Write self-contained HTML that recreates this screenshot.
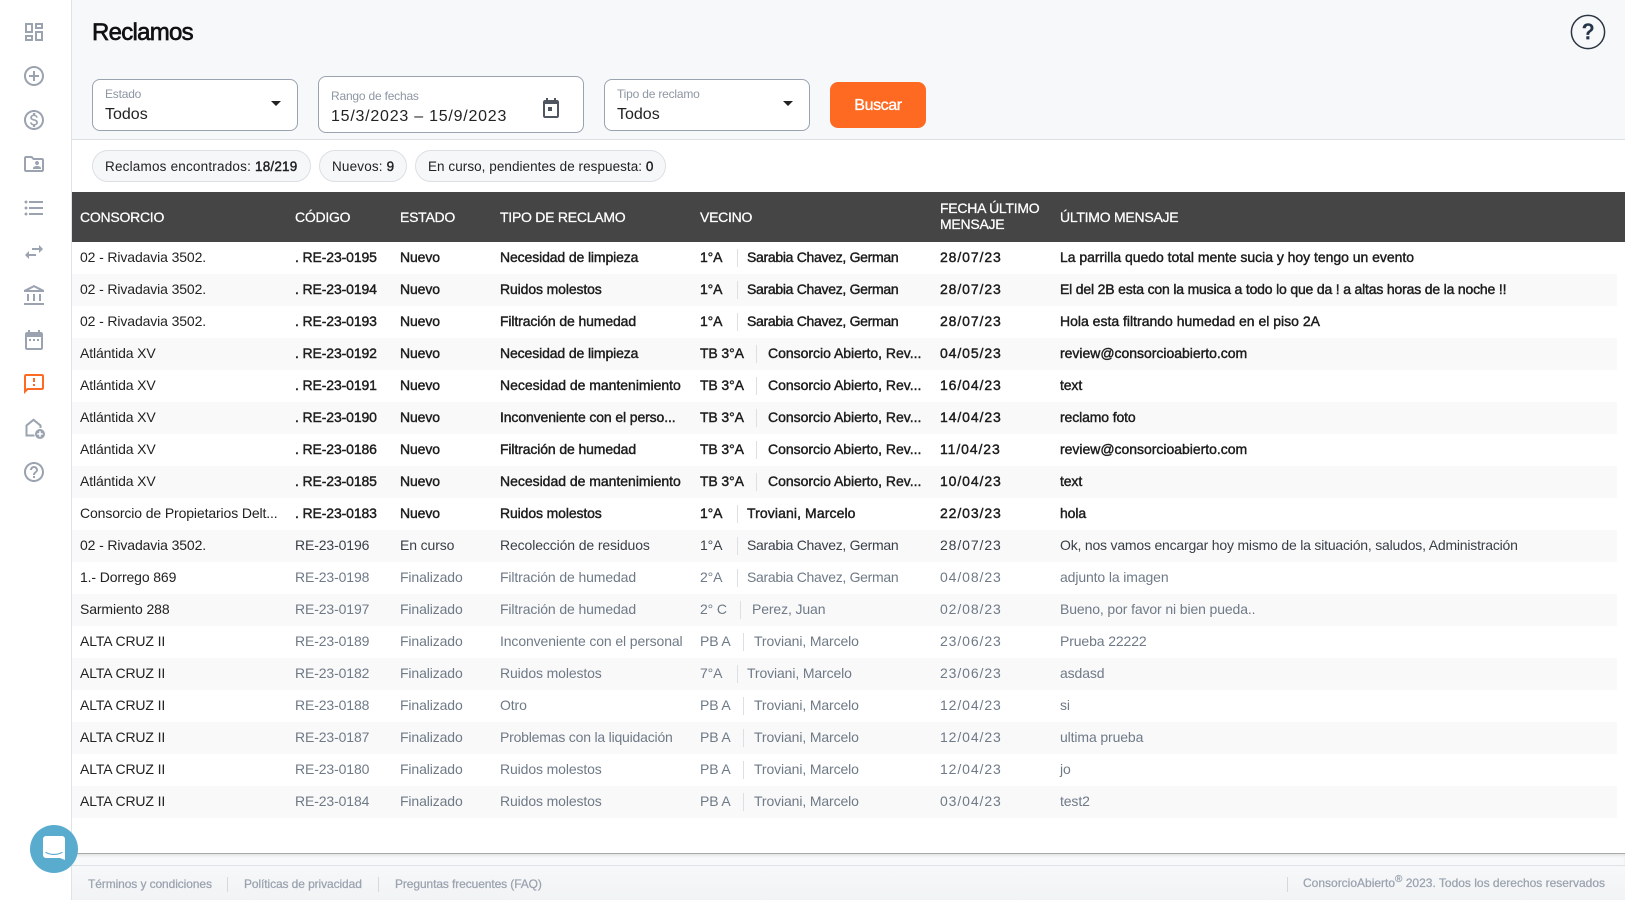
<!DOCTYPE html>
<html lang="es">
<head>
<meta charset="utf-8">
<title>Reclamos</title>
<style>
*{box-sizing:border-box}
html,body{margin:0;padding:0;width:1625px;height:900px;overflow:hidden;background:#fff;font-family:"Liberation Sans",sans-serif;color:#222}
.abs{position:absolute}
#side{position:absolute;left:0;top:0;width:72px;height:900px;background:#fff;border-right:1px solid #dfe2e7}
#side svg{position:absolute;left:22px;width:24px;height:24px;fill:#9aa3af}
#top{position:absolute;left:72px;top:0;width:1553px;height:140px;background:#f7f8fa;border-bottom:1px solid #dcdfe4}
h1{position:absolute;left:92px;top:17px;margin:0;font-size:24px;line-height:32px;font-weight:400;-webkit-text-stroke:.65px #111;letter-spacing:-.72px;color:#111}
.box{position:absolute;background:#fff;border:1px solid #9aa3b0;border-radius:8px}
.lab{position:absolute;font-size:12px;color:#8d96a3;letter-spacing:-.2px;white-space:nowrap}
.val{position:absolute;font-size:16px;color:#222;white-space:nowrap}
.car{position:absolute;width:0;height:0;border-left:5px solid transparent;border-right:5px solid transparent;border-top:5px solid #222}
#buscar{position:absolute;left:830px;top:83px;width:96px;height:46px;color:#fff;font-size:16px;letter-spacing:-.4px;text-align:center;line-height:46px;-webkit-text-stroke:.35px #fff}
#btn{position:absolute;left:830px;top:82px;width:96px;height:46px;background:#ff6a22;border-radius:8px}
.pill{position:absolute;top:150px;height:32px;background:#f6f7f9;border:1px solid #dcdfe4;border-radius:16px;font-size:13.5px;line-height:32px;white-space:nowrap;padding-left:12px;letter-spacing:.17px}
.pill b{font-weight:400;-webkit-text-stroke:.4px #222}
#thead{position:absolute;left:72px;top:192px;width:1553px;height:50px;background:#454545}
.th{position:absolute;color:#fff;font-size:14px;letter-spacing:-.25px;white-space:nowrap;line-height:16px;-webkit-text-stroke:.25px #fff}
.r{position:absolute;left:72px;width:1545px;height:32px;font-size:14px;line-height:32px;letter-spacing:-.12px}
.r.s{background:#f9f9fa}
.r span{position:absolute;top:-1px;white-space:nowrap}
.r i{position:absolute;top:7px;width:1px;height:18px;background:#dcdfe4}
.c1{left:8px}.c2{left:223px}.c3{left:328px}.c4{left:428px}.c5{left:628px}.c6{left:868px;letter-spacing:.9px}.c7{left:988px}.c8{letter-spacing:-.3px}
.n .c2,.n .c3,.n .c4,.n .c5,.n .c6,.n .c7,.n .c8{-webkit-text-stroke:.42px #1c1c1c;color:#1c1c1c}
.f span{color:#6f7a87}.f .c1{color:#222}
.e .c2,.e .c3,.e .c4,.e .c5,.e .c6,.e .c7,.e .c8{color:#3a4048}
#under{position:absolute;left:72px;top:853px;width:1553px;height:12px;background:#f8f9fa;border-top:1px solid #a9a9a9;box-shadow:inset 0 2px 2px rgba(0,0,0,.08)}
#foot{position:absolute;left:72px;top:865px;width:1553px;height:35px;background:linear-gradient(#f7f8fa,#f2f3f5);border-top:1px solid #dfe2e7}
.ft{position:absolute;top:876px;font-size:12px;line-height:16px;color:#9aa3af;white-space:nowrap;-webkit-text-stroke:.25px #9aa3af;letter-spacing:-.1px}
.fs{position:absolute;top:877px;width:1px;height:15px;background:#d5d8dd}
sup{font-size:10px;line-height:0}
#chat{position:absolute;left:30px;top:825px;width:48px;height:48px;border-radius:50%;background:#5aaccf}
</style>
</head>
<body>
<div id="top"></div>
<div id="side">
<svg style="top:20px" viewBox="0 0 24 24"><path d="M19 5v2h-4V5h4M9 5v6H5V5h4m10 8v6h-4v-6h4M9 17v2H5v-2h4M21 3h-8v6h8V3zM11 3H3v10h8V3zm10 8h-8v10h8V11zm-10 4H3v6h8v-6z"/></svg>
<svg style="top:64px" viewBox="0 0 24 24"><path d="M13 7h-2v4H7v2h4v4h2v-4h4v-2h-4V7zm-1-5C6.48 2 2 6.48 2 12s4.48 10 10 10 10-4.48 10-10S17.52 2 12 2zm0 18c-4.41 0-8-3.59-8-8s3.59-8 8-8 8 3.59 8 8-3.59 8-8 8z"/></svg>
<svg style="top:108px" viewBox="0 0 24 24"><path d="M12 2C6.48 2 2 6.48 2 12s4.48 10 10 10 10-4.48 10-10S17.52 2 12 2zm0 18c-4.41 0-8-3.59-8-8s3.59-8 8-8 8 3.59 8 8-3.59 8-8 8zm.31-8.86c-1.77-.45-2.34-.94-2.34-1.67 0-.84.79-1.43 2.1-1.43 1.38 0 1.9.66 1.94 1.64h1.71c-.05-1.34-.87-2.57-2.49-2.97V5H10.9v1.69c-1.51.32-2.72 1.3-2.72 2.81 0 1.79 1.49 2.69 3.66 3.21 1.95.46 2.34 1.15 2.34 1.87 0 .53-.39 1.39-2.1 1.39-1.6 0-2.23-.72-2.32-1.64H8.04c.1 1.7 1.36 2.66 2.86 2.97V19h2.34v-1.67c1.52-.29 2.72-1.16 2.73-2.77-.01-2.2-1.9-2.96-3.66-3.42z"/></svg>
<svg style="top:152px" viewBox="0 0 24 24"><path d="M20 6h-8l-2-2H4c-1.1 0-1.99.9-1.99 2L2 18c0 1.1.9 2 2 2h16c1.1 0 2-.9 2-2V8c0-1.1-.9-2-2-2zm0 12H4V6h5.17l2 2H20v10zm-5-5c1.1 0 2-.9 2-2s-.9-2-2-2-2 .9-2 2 .9 2 2 2zm-4 4h8v-1c0-1.33-2.67-2-4-2s-4 .67-4 2v1z"/></svg>
<svg style="top:196px" viewBox="0 0 24 24"><path d="M4 10.5c-.83 0-1.5.67-1.5 1.5s.67 1.5 1.5 1.5 1.5-.67 1.5-1.5-.67-1.5-1.5-1.5zm0-6c-.83 0-1.5.67-1.5 1.5S3.17 7.5 4 7.5 5.5 6.83 5.5 6 4.83 4.5 4 4.5zm0 12c-.83 0-1.5.68-1.5 1.5s.68 1.5 1.5 1.5 1.5-.68 1.5-1.5-.67-1.5-1.5-1.5zM7 19h14v-2H7v2zm0-6h14v-2H7v2zm0-8v2h14V5H7z"/></svg>
<svg style="top:240px" viewBox="0 0 24 24"><path d="M6.99 11L3 15l3.99 4v-3H14v-2H6.99v-3zM21 9l-3.99-4v3H10v2h7.01v3L21 9z"/></svg>
<svg style="top:284px" viewBox="0 0 24 24"><path d="M7 10H5v7h2v-7zm6 0h-2v7h2v-7zm9 9H2v2h20v-2zm-3-9h-2v7h2v-7zM12 3.26L17.21 6H6.79L12 3.26M12 1L2 6v2h20V6L12 1z"/></svg>
<svg style="top:328px" viewBox="0 0 24 24"><path d="M19 4h-1V2h-2v2H8V2H6v2H5c-1.1 0-2 .9-2 2v14c0 1.1.9 2 2 2h14c1.1 0 2-.9 2-2V6c0-1.1-.9-2-2-2zm0 16H5V9h14v11zM7 11h2v2H7zm4 0h2v2h-2zm4 0h2v2h-2z"/></svg>
<svg style="top:372px;fill:#ff6a22" viewBox="0 0 24 24"><path d="M20 2H4c-1.1 0-1.99.9-1.99 2L2 22l4-4h14c1.1 0 2-.9 2-2V4c0-1.1-.9-2-2-2zm0 14H5.17L4 17.17V4h16v12zm-9-4h2v2h-2zm0-6h2v4h-2z"/></svg>
<svg style="top:416px" viewBox="0 0 24 24"><path d="M11.5 2.5L3.5 9v11.5h9v-2H5.5V10l6-4.9 6 4.9v2h2V9z"/><circle cx="18" cy="18" r="5"/><path d="M17.2 15.2h1.6v2h2v1.6h-2v2h-1.6v-2h-2v-1.6h2z" fill="#fff"/></svg>
<svg style="top:460px" viewBox="0 0 24 24"><path d="M11 18h2v-2h-2v2zm1-16C6.48 2 2 6.48 2 12s4.48 10 10 10 10-4.48 10-10S17.52 2 12 2zm0 18c-4.41 0-8-3.59-8-8s3.59-8 8-8 8 3.59 8 8-3.59 8-8 8zm0-14c-2.21 0-4 1.79-4 4h2c0-1.1.9-2 2-2s2 .9 2 2c0 2-3 1.75-3 5h2c0-2.25 3-2.5 3-5 0-2.21-1.79-4-4-4z"/></svg>
</div>

<h1>Reclamos</h1>
<svg class="abs" style="left:1570px;top:14px" width="36" height="36" viewBox="0 0 36 36"><circle cx="18" cy="18" r="16.6" fill="none" stroke="#2c3542" stroke-width="1.5"/><path d="M12.6 14.2c.2-3.2 2.4-5 5.5-5 3.2 0 5.4 1.9 5.4 4.6 0 2-1 3.1-2.6 4.2-1.3.9-1.7 1.4-1.7 2.9h-2.8c0-2.3.6-3.2 2.3-4.4 1.3-.9 1.9-1.5 1.9-2.6 0-1.3-.9-2.2-2.3-2.2-1.5 0-2.4 1-2.5 2.5zM16.3 22.3h3.1v3.1h-3.1z" fill="#26364a"/></svg>

<div class="box" style="left:92px;top:79px;width:206px;height:52px"></div>
<div class="lab" style="left:105px;top:87px">Estado</div>
<div class="val" style="left:105px;top:106px">Todos</div>
<div class="car" style="left:271px;top:101px"></div>

<div class="box" style="left:318px;top:76px;width:266px;height:57px"></div>
<div class="lab" style="left:331px;top:89px">Rango de fechas</div>
<div class="val" style="left:331px;top:108px;letter-spacing:.76px">15/3/2023 – 15/9/2023</div>
<svg class="abs" style="left:539px;top:96px" width="24" height="24" viewBox="0 0 24 24" fill="#4f5661"><path d="M18 4h-1V2h-2v2H9V2H7v2H6C4.9 4 4 4.9 4 6v14c0 1.1.9 2 2 2h12c1.100 0 2-.9 2-2V6c0-1.100-.9-2-2-2zm0 16H6V8h12v12zM9 11h4v4H9z"/></svg>

<div class="box" style="left:604px;top:79px;width:206px;height:52px"></div>
<div class="lab" style="left:617px;top:87px">Tipo de reclamo</div>
<div class="val" style="left:617px;top:106px">Todos</div>
<div class="car" style="left:783px;top:101px"></div>

<div id="btn"></div>
<div id="buscar">Buscar</div>

<div class="pill" style="left:92px;width:219px;letter-spacing:.2px">Reclamos encontrados: <b>18/219</b></div>
<div class="pill" style="left:319px;width:88px">Nuevos: <b>9</b></div>
<div class="pill" style="left:415px;width:251px;letter-spacing:.05px">En curso, pendientes de respuesta: <b>0</b></div>

<div id="thead"></div>
<div class="th" style="left:80px;top:209px">CONSORCIO</div>
<div class="th" style="left:295px;top:209px">CÓDIGO</div>
<div class="th" style="left:400px;top:209px">ESTADO</div>
<div class="th" style="left:500px;top:209px">TIPO DE RECLAMO</div>
<div class="th" style="left:700px;top:209px">VECINO</div>
<div class="th" style="left:940px;top:200px">FECHA ÚLTIMO<br>MENSAJE</div>
<div class="th" style="left:1060px;top:209px">ÚLTIMO MENSAJE</div>

<div class="r n" style="top:242px"><span class="c1">02 - Rivadavia 3502.</span><span class="c2">. RE-23-0195</span><span class="c3">Nuevo</span><span class="c4">Necesidad de limpieza</span><span class="c5">1°A</span><i style="left:665px"></i><span class="c8" style="left:675px">Sarabia Chavez, German</span><span class="c6">28/07/23</span><span class="c7" style="letter-spacing:-.03px">La parrilla quedo total mente sucia y hoy tengo un evento</span></div>
<div class="r n s" style="top:274px"><span class="c1">02 - Rivadavia 3502.</span><span class="c2">. RE-23-0194</span><span class="c3">Nuevo</span><span class="c4">Ruidos molestos</span><span class="c5">1°A</span><i style="left:665px"></i><span class="c8" style="left:675px">Sarabia Chavez, German</span><span class="c6">28/07/23</span><span class="c7" style="letter-spacing:-.18px">El del 2B esta con la musica a todo lo que da ! a altas horas de la noche !!</span></div>
<div class="r n" style="top:306px"><span class="c1">02 - Rivadavia 3502.</span><span class="c2">. RE-23-0193</span><span class="c3">Nuevo</span><span class="c4">Filtración de humedad</span><span class="c5">1°A</span><i style="left:665px"></i><span class="c8" style="left:675px">Sarabia Chavez, German</span><span class="c6">28/07/23</span><span class="c7" style="letter-spacing:0">Hola esta filtrando humedad en el piso 2A</span></div>
<div class="r n s" style="top:338px"><span class="c1">Atlántida XV</span><span class="c2">. RE-23-0192</span><span class="c3">Nuevo</span><span class="c4">Necesidad de limpieza</span><span class="c5">TB 3°A</span><i style="left:684px"></i><span class="c8" style="left:696px;letter-spacing:-.02px">Consorcio Abierto, Rev...</span><span class="c6">04/05/23</span><span class="c7" style="letter-spacing:-.02px">review@consorcioabierto.com</span></div>
<div class="r n" style="top:370px"><span class="c1">Atlántida XV</span><span class="c2">. RE-23-0191</span><span class="c3">Nuevo</span><span class="c4" style="letter-spacing:-.02px">Necesidad de mantenimiento</span><span class="c5">TB 3°A</span><i style="left:684px"></i><span class="c8" style="left:696px;letter-spacing:-.02px">Consorcio Abierto, Rev...</span><span class="c6">16/04/23</span><span class="c7">text</span></div>
<div class="r n s" style="top:402px"><span class="c1">Atlántida XV</span><span class="c2">. RE-23-0190</span><span class="c3">Nuevo</span><span class="c4">Inconveniente con el perso...</span><span class="c5">TB 3°A</span><i style="left:684px"></i><span class="c8" style="left:696px;letter-spacing:-.02px">Consorcio Abierto, Rev...</span><span class="c6">14/04/23</span><span class="c7">reclamo foto</span></div>
<div class="r n" style="top:434px"><span class="c1">Atlántida XV</span><span class="c2">. RE-23-0186</span><span class="c3">Nuevo</span><span class="c4">Filtración de humedad</span><span class="c5">TB 3°A</span><i style="left:684px"></i><span class="c8" style="left:696px;letter-spacing:-.02px">Consorcio Abierto, Rev...</span><span class="c6">11/04/23</span><span class="c7" style="letter-spacing:-.02px">review@consorcioabierto.com</span></div>
<div class="r n s" style="top:466px"><span class="c1">Atlántida XV</span><span class="c2">. RE-23-0185</span><span class="c3">Nuevo</span><span class="c4" style="letter-spacing:-.02px">Necesidad de mantenimiento</span><span class="c5">TB 3°A</span><i style="left:684px"></i><span class="c8" style="left:696px;letter-spacing:-.02px">Consorcio Abierto, Rev...</span><span class="c6">10/04/23</span><span class="c7">text</span></div>
<div class="r n" style="top:498px"><span class="c1">Consorcio de Propietarios Delt...</span><span class="c2">. RE-23-0183</span><span class="c3">Nuevo</span><span class="c4">Ruidos molestos</span><span class="c5">1°A</span><i style="left:665px"></i><span class="c8" style="left:675px;letter-spacing:.1px">Troviani, Marcelo</span><span class="c6">22/03/23</span><span class="c7">hola</span></div>
<div class="r e s" style="top:530px"><span class="c1">02 - Rivadavia 3502.</span><span class="c2">RE-23-0196</span><span class="c3">En curso</span><span class="c4">Recolección de residuos</span><span class="c5">1°A</span><i style="left:665px"></i><span class="c8" style="left:675px">Sarabia Chavez, German</span><span class="c6">28/07/23</span><span class="c7" style="letter-spacing:-.2px">Ok, nos vamos encargar hoy mismo de la situación, saludos, Administración</span></div>
<div class="r f" style="top:562px"><span class="c1">1.- Dorrego 869</span><span class="c2">RE-23-0198</span><span class="c3">Finalizado</span><span class="c4">Filtración de humedad</span><span class="c5">2°A</span><i style="left:665px"></i><span class="c8" style="left:675px">Sarabia Chavez, German</span><span class="c6">04/08/23</span><span class="c7">adjunto la imagen</span></div>
<div class="r f s" style="top:594px"><span class="c1">Sarmiento 288</span><span class="c2">RE-23-0197</span><span class="c3">Finalizado</span><span class="c4">Filtración de humedad</span><span class="c5">2° C</span><i style="left:668px"></i><span style="left:680px">Perez, Juan</span><span class="c6">02/08/23</span><span class="c7">Bueno, por favor ni bien pueda..</span></div>
<div class="r f" style="top:626px"><span class="c1">ALTA CRUZ II</span><span class="c2">RE-23-0189</span><span class="c3">Finalizado</span><span class="c4">Inconveniente con el personal</span><span class="c5">PB A</span><i style="left:671px"></i><span style="left:682px">Troviani, Marcelo</span><span class="c6">23/06/23</span><span class="c7">Prueba 22222</span></div>
<div class="r f s" style="top:658px"><span class="c1">ALTA CRUZ II</span><span class="c2">RE-23-0182</span><span class="c3">Finalizado</span><span class="c4">Ruidos molestos</span><span class="c5">7°A</span><i style="left:665px"></i><span style="left:675px">Troviani, Marcelo</span><span class="c6">23/06/23</span><span class="c7">asdasd</span></div>
<div class="r f" style="top:690px"><span class="c1">ALTA CRUZ II</span><span class="c2">RE-23-0188</span><span class="c3">Finalizado</span><span class="c4">Otro</span><span class="c5">PB A</span><i style="left:671px"></i><span style="left:682px">Troviani, Marcelo</span><span class="c6">12/04/23</span><span class="c7">si</span></div>
<div class="r f s" style="top:722px"><span class="c1">ALTA CRUZ II</span><span class="c2">RE-23-0187</span><span class="c3">Finalizado</span><span class="c4" style="letter-spacing:-.2px">Problemas con la liquidación</span><span class="c5">PB A</span><i style="left:671px"></i><span style="left:682px">Troviani, Marcelo</span><span class="c6">12/04/23</span><span class="c7">ultima prueba</span></div>
<div class="r f" style="top:754px"><span class="c1">ALTA CRUZ II</span><span class="c2">RE-23-0180</span><span class="c3">Finalizado</span><span class="c4">Ruidos molestos</span><span class="c5">PB A</span><i style="left:671px"></i><span style="left:682px">Troviani, Marcelo</span><span class="c6">12/04/23</span><span class="c7">jo</span></div>
<div class="r f s" style="top:786px"><span class="c1">ALTA CRUZ II</span><span class="c2">RE-23-0184</span><span class="c3">Finalizado</span><span class="c4">Ruidos molestos</span><span class="c5">PB A</span><i style="left:671px"></i><span style="left:682px">Troviani, Marcelo</span><span class="c6">03/04/23</span><span class="c7">test2</span></div>

<div id="under"></div>
<div id="foot"></div>
<div class="ft" style="left:88px">Términos y condiciones</div>
<div class="fs" style="left:227px"></div>
<div class="ft" style="left:244px">Políticas de privacidad</div>
<div class="fs" style="left:378px"></div>
<div class="ft" style="left:395px">Preguntas frecuentes (FAQ)</div>
<div class="fs" style="left:1287px"></div>
<div class="ft" style="left:1303px;top:875px;letter-spacing:0">ConsorcioAbierto<sup>®</sup> 2023. Todos los derechos reservados</div>

<div id="chat"><svg class="abs" style="left:13px;top:11px" width="23" height="27" viewBox="0 0 23 27"><path d="M3 0h16a3 3 0 0 1 3 3v21l-5-2H3a3 3 0 0 1-3-3V3a3 3 0 0 1 3-3z" fill="#fff"/><path d="M3 16.500c5 2.500 11 2.500 16 0" fill="none" stroke="#5aaccf" stroke-width="1.2" stroke-linecap="round"/></svg></div>
</body>
</html>
